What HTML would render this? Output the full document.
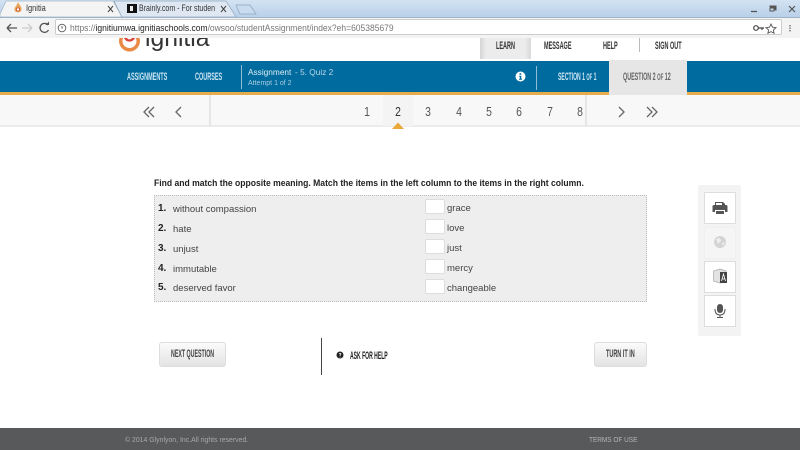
<!DOCTYPE html>
<html><head><meta charset="utf-8"><style>
html,body{margin:0;padding:0}
body{width:800px;height:450px;position:relative;overflow:hidden;background:#fff;font-family:"Liberation Sans",sans-serif;color:#333}
.a{position:absolute;white-space:nowrap}
.n{position:absolute;white-space:nowrap;font-family:"Liberation Sans",sans-serif;font-size:11px;line-height:12px;transform:scaleX(.5);transform-origin:0 50%}
.r{position:absolute;width:20px;text-align:center;font-size:13px;color:#555;transform:scaleX(.8);top:104px}
.it{position:absolute;font-size:9.5px;color:#444;white-space:nowrap;line-height:12px}
.b{position:absolute;font-size:10px;font-weight:bold;color:#222;line-height:12px}
.cb{position:absolute;left:425px;width:18px;height:13px;background:#fff;border:1px solid #ddd;border-radius:2px}
.tool{position:absolute;left:704px;width:30px;height:30px;background:#fff;border:1px solid #ddd}
.btn{position:absolute;top:342px;height:25px;background:linear-gradient(#fbfbfb,#e4e4e4);border:1px solid #ddd;border-radius:3px;box-sizing:border-box}
</style></head><body>
<!-- browser chrome -->
<div class="a" style="left:0;top:0;width:800px;height:17px;background:linear-gradient(#d3e3f3,#b9d0e8)"></div>
<svg class="a" style="left:0;top:0" width="260" height="18">
<path d="M0 14 L6 1 H113 L122 17 H0Z" fill="#f4f4f4" stroke="#9fb4c9" stroke-width=".7"/>
<path d="M122 17 L114 1 H226 L236 17Z" fill="#dfe8f2" stroke="#8fa6bd" stroke-width=".7"/>
<path d="M240 14 L236 5 H250 L256 14Z" fill="#c9dcef" stroke="#8fa6bd" stroke-width=".7"/>
<path d="M18 2 C19 5 22 6 21.500 10 C21 13 15 13 14.500 10 C14 7 17 6 18 2Z" fill="#e8a55a"/>
<circle cx="18" cy="9.500" r="1.600" fill="#fff" stroke="#c9502c" stroke-width=".8"/>
<path d="M108 6 L113 12 M113 6 L108 12" stroke="#444" stroke-width="1"/>
<path d="M127 4 H137 V13 H127Z" fill="#111"/><path d="M130 6 H133 V11 H130Z" fill="#eee"/>
<path d="M221 6 L226 12 M226 6 L221 12" stroke="#444" stroke-width="1"/>
</svg>
<div class="a" style="left:26px;top:3px;font-size:9.500px;line-height:12px;color:#333;transform:scaleX(.78);transform-origin:0 50%">Ignitia</div>
<div class="a" style="left:139px;top:3px;font-size:9.500px;line-height:12px;color:#333;transform:scaleX(.74);transform-origin:0 50%">Brainly.com - For studen</div>
<div class="a" style="left:0;top:17px;width:800px;height:21px;background:#f3f3f3;border-top:1px solid #9db4ca;box-sizing:border-box"></div>
<div class="a" style="left:55px;top:19px;width:727px;height:16px;background:#fff;border:1px solid #ccc;border-radius:2px;box-sizing:border-box"></div>
<svg class="a" style="left:0;top:17px" width="72" height="21">
<path d="M7 11 H17 M7 11 L11 7 M7 11 L11 15" stroke="#555" stroke-width="1.300" fill="none"/>
<path d="M22 11 H32 M32 11 L28 7 M32 11 L28 15" stroke="#ccc" stroke-width="1.300" fill="none"/>
<path d="M48 8 A4.500 4.500 0 1 0 48.500 13" stroke="#555" stroke-width="1.300" fill="none"/><path d="M45.500 8 H49 V4.500Z" fill="#555"/>
<circle cx="62" cy="11" r="3.800" fill="none" stroke="#666" stroke-width="1"/><path d="M62 9 V11.800" stroke="#666"/>
</svg>
<div class="a" style="left:70px;top:22px;font-size:9px;line-height:12px;color:#777;transform:scaleX(.945);transform-origin:0 50%">https://<span style="color:#222">ignitiumwa.ignitiaschools.com</span>/owsoo/studentAssignment/index?eh=605385679</div>
<svg class="a" style="left:745px;top:0" width="55" height="38">
<circle cx="11" cy="28" r="2.300" fill="none" stroke="#444" stroke-width="1.200"/><path d="M13 28 H19 M17 28 V30" stroke="#444" stroke-width="1.200"/>
<path d="M26 24 L27.500 27.200 L31 27.600 L28.400 30 L29.100 33.300 L26 31.600 L22.900 33.300 L23.600 30 L21 27.600 L24.500 27.200Z" fill="none" stroke="#555" stroke-width=".9"/>
<path d="M45 25 V26.400 M45 27.500 V28.900 M45 30 V31.400" stroke="#666" stroke-width="1.400"/>
<path d="M6 11.500 H12" stroke="#555" stroke-width="1.300"/>
<path d="M25 7 H30 V10 M25 7 V6 H31 V10 H30 M25 8 H29 V11 H25Z" fill="none" stroke="#555" stroke-width="1"/>
<path d="M44 6 L50 12 M50 6 L44 12" stroke="#555" stroke-width="1.200"/>
</svg>
<!-- site header -->
<svg class="a" style="left:116px;top:38px" width="30" height="16">
<circle cx="13.500" cy="3" r="10.500" fill="#e98b44"/>
<circle cx="13.500" cy="3" r="7" fill="#fff"/>
<path d="M8 0 A6 6 0 0 0 19 0 L16 0 A3 3 0 0 1 11 0Z" fill="#d8453a"/>
</svg>
<div class="a" style="left:145px;top:26px;height:26px;overflow:hidden;width:70px;clip-path:inset(12px 0 0 0)"><span style="font-size:24.700px;line-height:26px;color:#333;display:block">ignitia</span></div>
<div class="a" style="left:480px;top:38px;width:51px;height:21px;background:linear-gradient(90deg,#d4d4d4,#ececec 12%,#ececec 88%,#d8d8d8)"></div>
<div class="a" style="left:639px;top:38px;width:1px;height:14px;background:#bbb"></div>
<div class="n" style="left:496px;top:40px;font-weight:bold;color:#333">LEARN</div>
<div class="n" style="left:544px;top:40px;font-weight:bold;color:#333">MESSAGE</div>
<div class="n" style="left:603px;top:40px;font-weight:bold;color:#333">HELP</div>
<div class="n" style="left:655px;top:40px;font-weight:bold;color:#333">SIGN OUT</div>
<!-- blue bar -->
<div class="a" style="left:0;top:61px;width:800px;height:31px;background:#006b9f"></div>
<div class="a" style="left:0;top:92px;width:800px;height:3px;background:#e6ab4a"></div>
<div class="a" style="left:609px;top:60px;width:78px;height:35px;background:#e6e6e6"></div>
<div class="n" style="left:127px;top:71px;font-weight:bold;color:#c9e4f2">ASSIGNMENTS</div>
<div class="n" style="left:195px;top:71px;font-weight:bold;color:#c9e4f2">COURSES</div>
<div class="a" style="left:241px;top:65px;width:1px;height:24px;background:#8fbcd4"></div>
<div class="a" style="left:248px;top:66px;font-size:8.300px;line-height:12px;color:#dcecf5">Assignment</div>
<div class="a" style="left:295px;top:66px;font-size:8.300px;line-height:12px;color:#bcd8e8">- 5. Quiz 2</div>
<div class="a" style="left:248px;top:78px;font-size:7px;line-height:12px;color:#a9cde0">Attempt 1 of 2</div>
<svg class="a" style="left:515px;top:71px" width="11" height="11"><circle cx="5.500" cy="5.500" r="5" fill="#fff"/><path d="M4.500 2.300 H6.300 V3.800 H4.500Z M4.200 4.800 H6.300 V7.800 H7 V8.800 H4 V7.800 H4.800 V5.700 H4.200Z" fill="#006b9f"/></svg>
<div class="a" style="left:536px;top:66px;width:1px;height:24px;background:#8fbcd4"></div>
<div class="n" style="left:558px;top:71px;color:#cde6f3;font-weight:bold;transform:scaleX(.465)">SECTION 1 <span style="font-size:9px">OF</span> 1</div>
<div class="n" style="left:623px;top:71px;color:#666;font-weight:bold;transform:scaleX(.49)">QUESTION 2 <span style="font-size:9px">OF</span> 12</div>
<!-- pagination -->
<div class="a" style="left:0;top:95px;width:800px;height:32px;background:#f8f8f8;border-bottom:2px solid #ececec;box-sizing:border-box"></div>
<div class="a" style="left:209px;top:95px;width:2px;height:31px;background:#e6e6e6"></div>
<div class="a" style="left:585px;top:95px;width:2px;height:31px;background:#e6e6e6"></div>
<div class="a" style="left:383px;top:95px;width:30px;height:31px;background:#f4f4f4"></div>
<div class="r" style="left:357px">1</div><div class="r" style="left:388px;color:#333">2</div><div class="r" style="left:418px">3</div><div class="r" style="left:449px">4</div><div class="r" style="left:479px">5</div><div class="r" style="left:509px">6</div><div class="r" style="left:540px">7</div><div class="r" style="left:570px">8</div>
<svg class="a" style="left:140px;top:100px" width="530" height="30" fill="none" stroke="#666" stroke-width="1.300">
<path d="M9 7 L4 12 L9 17 M14 7 L9 12 L14 17"/>
<path d="M41 7 L36 12 L41 17"/>
<path d="M479 7 L484 12 L479 17"/>
<path d="M503 7 L508 12 L503 17 M508 7 L513 12 L508 17" transform="translate(4 0)"/>
<path d="M252 29 L258 22.500 L264 29Z" fill="#e8a93a" stroke="none"/>
</svg>
<!-- question -->
<div class="a" style="left:154px;top:177px;font-size:9px;line-height:13px;font-weight:bold;color:#222;transform:scaleX(.953);transform-origin:0 50%">Find and match the opposite meaning. Match the items in the left column to the items in the right column.</div>
<div class="a" style="left:154px;top:195px;width:493px;height:107px;background:#eee;border:1px dotted #bbb;box-sizing:border-box"></div>
<div class="b" style="left:158px;top:203px">1.</div><div class="it" style="left:173px;top:204px">without compassion</div>
<div class="b" style="left:158px;top:223px">2.</div><div class="it" style="left:173px;top:224px">hate</div>
<div class="b" style="left:158px;top:243px">3.</div><div class="it" style="left:173px;top:244px">unjust</div>
<div class="b" style="left:158px;top:263px">4.</div><div class="it" style="left:173px;top:264px">immutable</div>
<div class="b" style="left:158px;top:282px">5.</div><div class="it" style="left:173px;top:283px">deserved favor</div>
<div class="cb" style="top:199px"></div><div class="it" style="left:447px;top:203px">grace</div>
<div class="cb" style="top:219px"></div><div class="it" style="left:447px;top:223px">love</div>
<div class="cb" style="top:239px"></div><div class="it" style="left:447px;top:243px">just</div>
<div class="cb" style="top:259px"></div><div class="it" style="left:447px;top:263px">mercy</div>
<div class="cb" style="top:279px"></div><div class="it" style="left:447px;top:283px">changeable</div>
<!-- tools -->
<div class="a" style="left:698px;top:185px;width:43px;height:151px;background:#f3f3f3;border-radius:2px"></div>
<div class="tool" style="top:192px"></div>
<div class="tool" style="top:227px;background:#f5f5f5;border-color:#f0f0f0"></div>
<div class="tool" style="top:261px"></div>
<div class="tool" style="top:295px"></div>
<svg class="a" style="left:704px;top:192px" width="32" height="136">
<path d="M11 13 V10 H19 L21 12 V13 M10 13 H22 Q23.500 13 23.500 14.500 V20 H21 V18 H11 V20 H8.500 V14.500 Q8.500 13 10 13Z M12 19 H20 V22 H12Z" fill="#555"/>
<path d="M12 11 H18 V13 H12Z" fill="#fff"/>
<circle cx="16" cy="50" r="6" fill="#d4d4d4"/><path d="M12 47 L16 46 L17 49 L14 52Z M18 51 L21 50 L19 54Z" fill="#eee"/>
<path d="M9.500 79 L16 77 L22 79 V89 L16 91 L9.500 89Z" fill="#e2e2e2" stroke="#999" stroke-width=".6"/>
<path d="M16 80 H23 V91 H16Z" fill="#444"/>
<path d="M17.500 89 L19.500 82 L21.500 89 M18.300 87 H20.700" stroke="#fff" fill="none" stroke-width=".8"/>
<rect x="13" y="112" width="6" height="9" rx="3" fill="#555"/>
<path d="M11 117 Q11 123 16 123 Q21 123 21 117 M16 123 V125 M13 125.500 H19" fill="none" stroke="#555" stroke-width="1"/>
</svg>
<!-- buttons -->
<div class="btn" style="left:159px;width:67px"></div>
<div class="n" style="left:171px;top:348px;font-weight:bold;color:#444;transform:scaleX(.48)">NEXT QUESTION</div>
<div class="a" style="left:321px;top:338px;width:1px;height:37px;background:#444"></div>
<svg class="a" style="left:336px;top:351px" width="9" height="9"><circle cx="4" cy="4" r="3.500" fill="#222"/><path d="M3 3 Q4 1.500 5 3 L4 4.500 V5 M4 5.800 V6.500" stroke="#fff" stroke-width=".7" fill="none"/></svg>
<div class="n" style="left:350px;top:350px;font-weight:bold;color:#222;transform:scaleX(.46)">ASK FOR HELP</div>
<div class="btn" style="left:594px;width:53px"></div>
<div class="n" style="left:606px;top:348px;font-weight:bold;color:#444">TURN IT IN</div>
<!-- footer -->
<div class="a" style="left:0;top:428px;width:800px;height:22px;background:#58595b"></div>
<div class="a" style="left:125px;top:434px;font-size:7.500px;line-height:12px;color:#a9a9a9;transform:scaleX(.92);transform-origin:0 50%">© 2014 Glynlyon, Inc.All rights reserved.</div>
<div class="a" style="left:589px;top:434px;font-size:7.500px;line-height:12px;color:#b5b5b5;transform:scaleX(.86);transform-origin:0 50%">TERMS OF USE</div>
</body></html>
